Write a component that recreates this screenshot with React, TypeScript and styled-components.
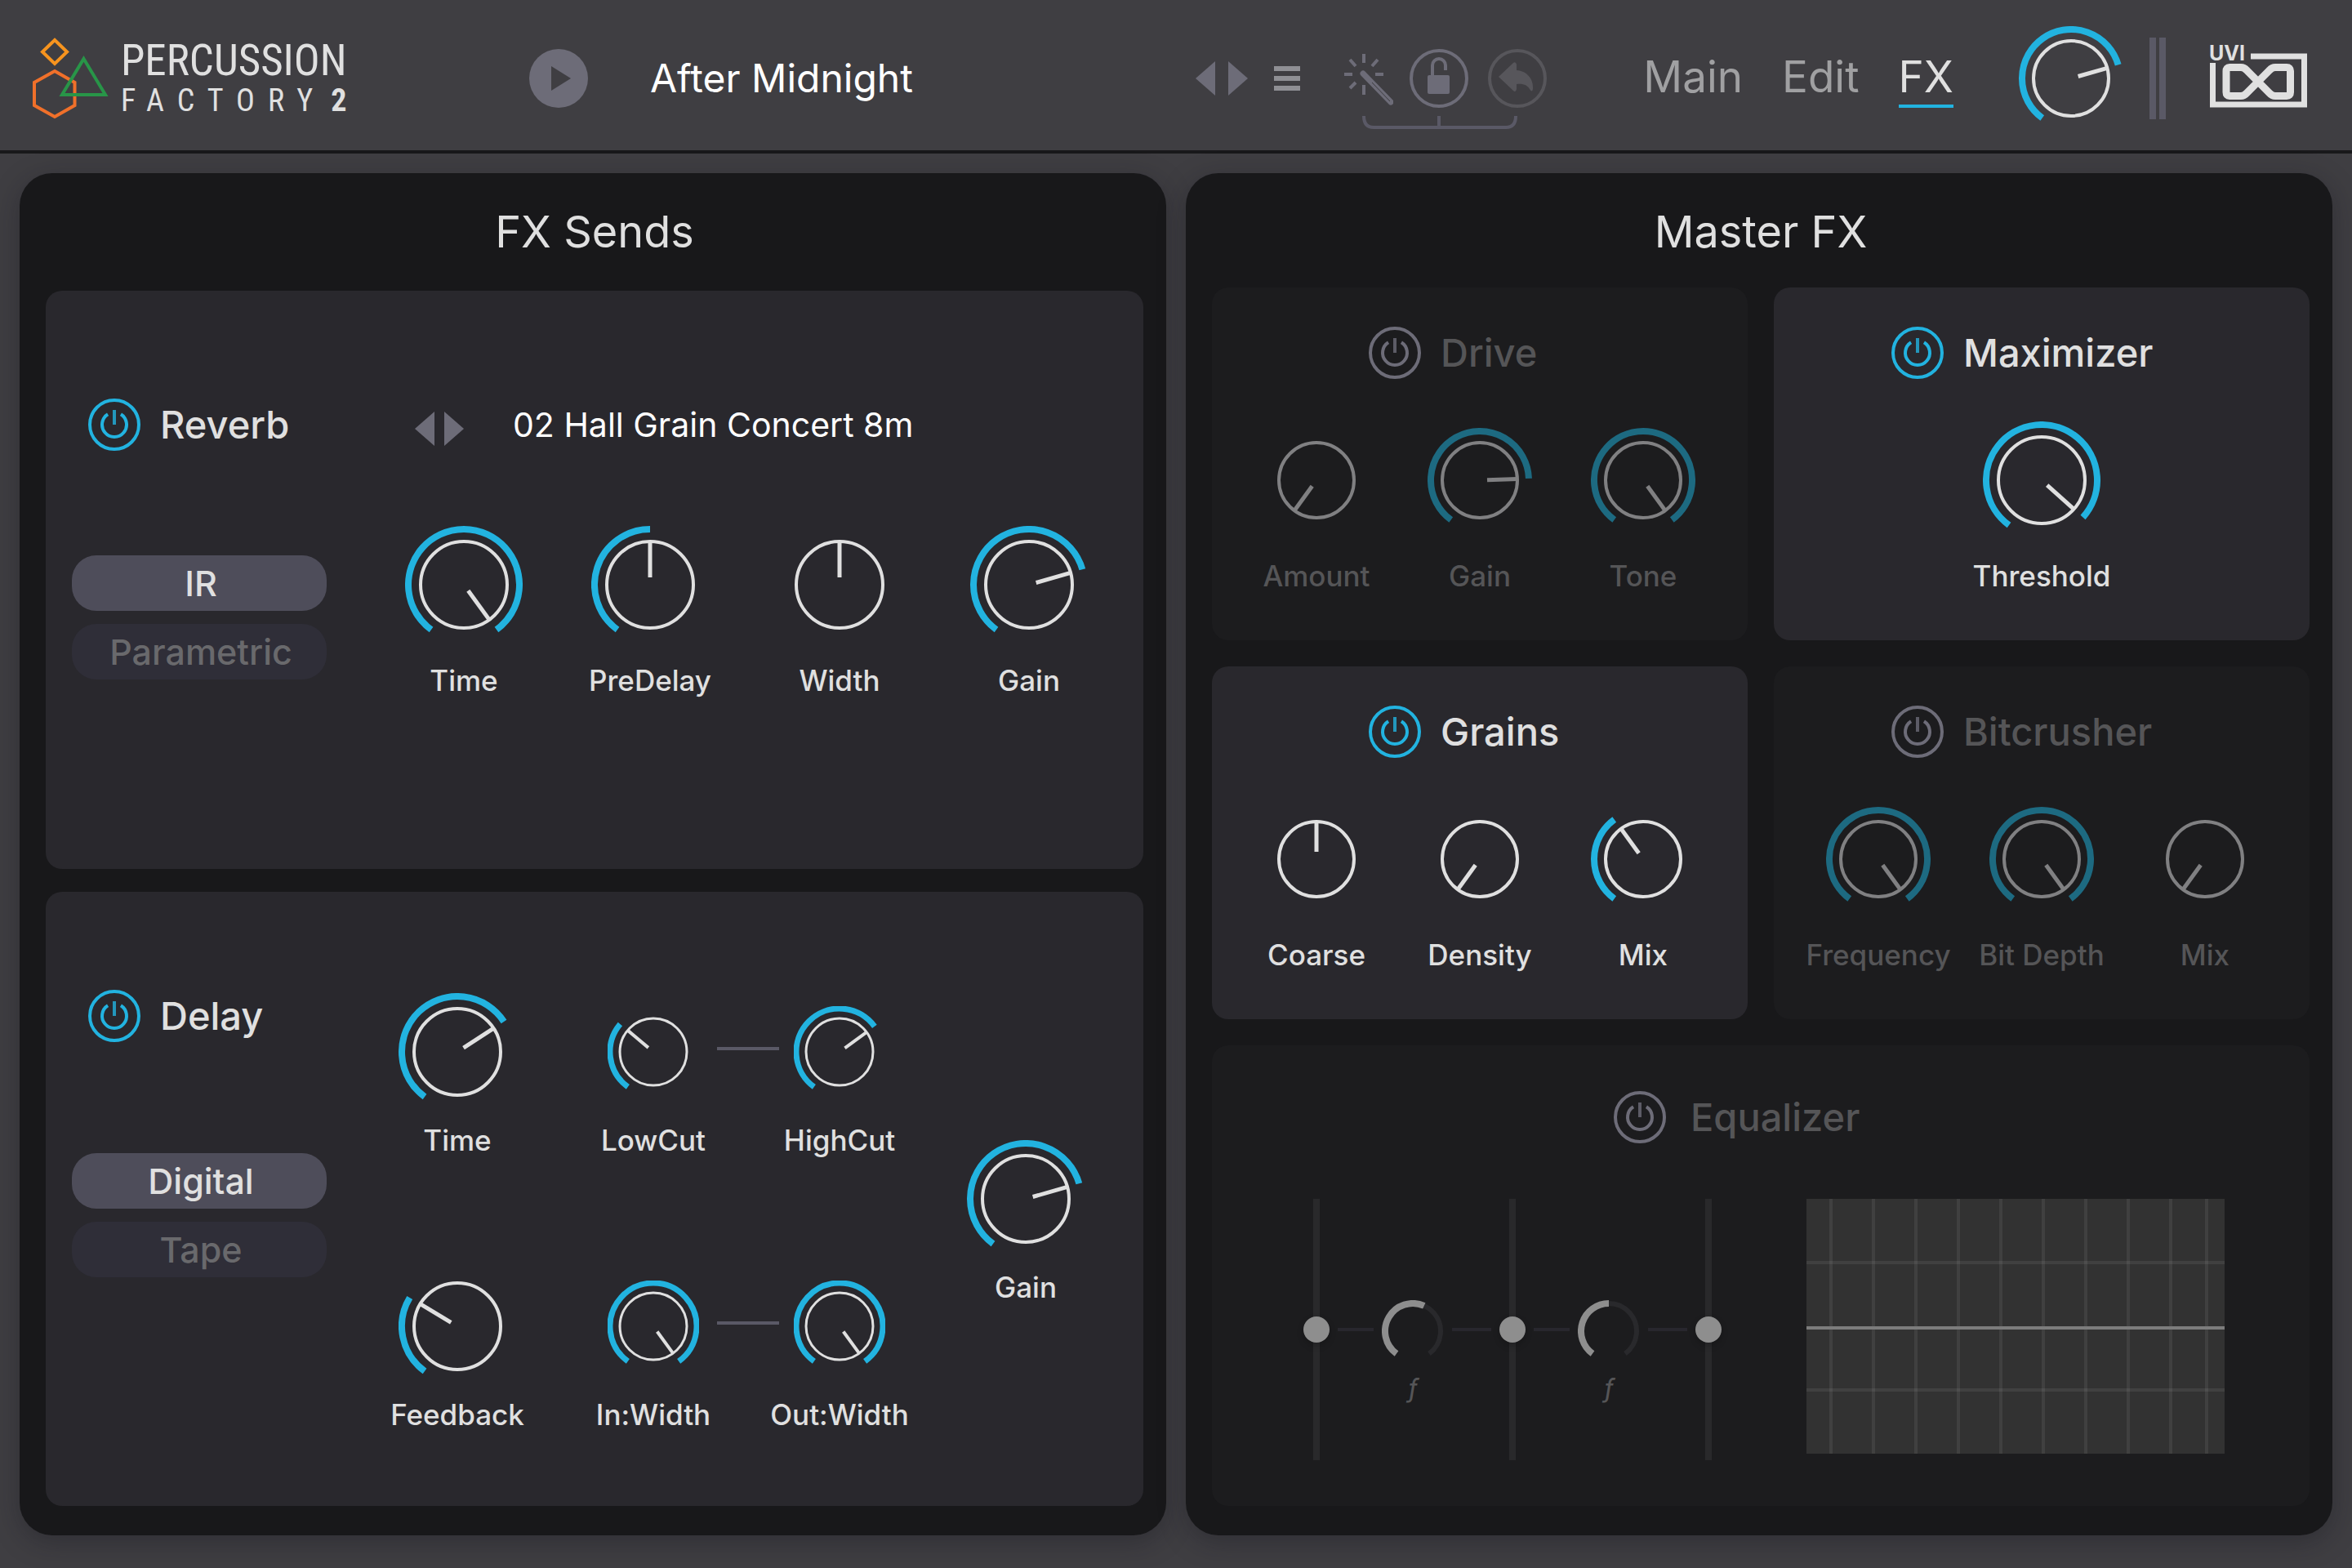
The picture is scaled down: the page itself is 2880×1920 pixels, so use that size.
import React, { useId, useState } from 'react';
import styled, { createGlobalStyle, css } from 'styled-components';

const c = {
  shell: '#3f3e42',
  line: '#18181a',
  panel: '#18181a',
  card: '#29282d',
  cardOff: '#1c1c1e',
  text: '#e0e0e0',
  textOff: '#555557',
  blue: '#22b3e0',
  blueOff: '#1d6a81',
  ringOff: '#808082',
  steel: '#6d6c78',
  slate: '#5a5966',
};

const GlobalStyle = createGlobalStyle`
  *, *::before, *::after { box-sizing: border-box; }
  body {
    margin: 0;
    background: ${c.shell};
    color: ${c.text};
    font-family: Inter, "Open Sans", "Liberation Sans", sans-serif;
  }
  button {
    margin: 0;
    padding: 0;
    border: 0;
    background: none;
    color: inherit;
    font: inherit;
    cursor: pointer;
  }
  svg { display: block; }
`;

/* ---------- shell ---------- */

const Page = styled.div`
  display: flex;
  flex-direction: column;
  min-height: 100vh;
`;

const TopBar = styled.header`
  display: flex;
  align-items: center;
  height: 188px;
  padding: 8px 52px 0 40px;
  border-bottom: 4px solid ${c.line};
`;

const Brand = styled.h1`
  display: flex;
  align-items: center;
  gap: 14px;
  flex: 0 0 608px;
  margin: 0;
  font-weight: 400;
`;

const BrandText = styled.span`
  display: flex;
  flex-direction: column;
  font-family: "Roboto Condensed", "Liberation Sans Narrow", "DejaVu Sans Condensed", sans-serif;
`;

const BrandName = styled.span`
  font-size: 53px;
  line-height: 54px;
`;

const BrandSub = styled.span`
  font-size: 38px;
  line-height: 44px;
  letter-spacing: 16px;
  white-space: nowrap;
`;

const BrandNumber = styled.b`
  margin-left: 6px;
`;

const NowPlaying = styled.div`
  display: flex;
  align-items: center;
  gap: 76px;
  flex: 1;
`;

const SoundName = styled.span`
  color: #fff;
  font-size: 48px;
  line-height: 56px;
  white-space: nowrap;
`;

const Browse = styled.div`
  display: flex;
  align-items: center;
  gap: 32px;
  margin-right: 54px;
`;

const Stepper = styled.div`
  display: flex;
  gap: ${(p: { $gap: number }) => p.$gap}px;
`;

const Tools = styled.div`
  padding-top: 26px;
  margin-right: 118px;
`;

const ToolRow = styled.div`
  display: flex;
  align-items: center;
`;

const ToolButton = styled.button<{ $gap?: number }>`
  margin-right: ${(p) => p.$gap ?? 0}px;
`;

const Nav = styled.nav`
  display: flex;
  gap: 48px;
  margin-right: 80px;
`;

const NavButton = styled.button<{ $active?: boolean }>`
  font-size: 53px;
  line-height: 68px;
  color: ${(p) => (p.$active ? c.text : '#a0a0a2')};
  border-bottom: 4px solid ${(p) => (p.$active ? c.blue : 'transparent')};
`;

const Meters = styled.div`
  display: flex;
  gap: 4px;
  margin: 0 52px 0 32px;
`;

const Meter = styled.div`
  width: 8px;
  height: 100px;
  background: ${c.slate};
`;

const Main = styled.main`
  flex: 1;
  display: grid;
  grid-template-columns: 1fr 1fr;
  gap: 24px;
  padding: 24px 24px 40px;
`;

const Panel = styled.section`
  display: flex;
  flex-direction: column;
  padding: 0 28px 36px 32px;
  border-radius: 40px;
  background: ${c.panel};
  box-shadow: 0 8px 32px rgba(20, 20, 28, 0.35);
`;

const PanelTitle = styled.h2<{ $bottom: number }>`
  margin: 0;
  padding: 40px 0 ${(p) => p.$bottom}px;
  font-size: 54px;
  font-weight: 400;
  line-height: 64px;
  text-align: center;
`;

const SendStack = styled.div`
  flex: 1;
  display: grid;
  grid-template-rows: 708fr 752fr;
  gap: 28px;
`;

const MasterGrid = styled.div`
  flex: 1;
  display: grid;
  grid-template-columns: 1fr 1fr;
  grid-template-rows: 432fr 432fr 564fr;
  gap: 32px;
`;

const Card = styled.article<{ $off?: boolean; $wide?: boolean }>`
  border-radius: 20px;
  background: ${(p) => (p.$off ? c.cardOff : c.card)};
  color: ${(p) => (p.$off ? c.textOff : c.text)};
  ${(p) => p.$wide && css`grid-column: 1 / -1;`}
`;

const SendCard = styled(Card)`
  display: flex;
`;

/* ---------- modules ---------- */

const ModuleHead = styled.div<{ $inset?: number; $top?: number; $gap?: number }>`
  display: flex;
  align-items: center;
  gap: ${(p) => p.$gap ?? 24}px;
  height: 64px;
  margin: ${(p) => p.$top ?? 0}px 0 0 ${(p) => p.$inset ?? 0}px;
`;

const ModuleName = styled.h3`
  margin: 0;
  font-size: 47px;
  font-weight: 500;
  line-height: 64px;
`;

const Side = styled.div<{ $top: number }>`
  flex: 0 0 312px;
  margin-left: 32px;
  padding-top: ${(p) => p.$top}px;
`;

const ModeGroup = styled.div<{ $top: number }>`
  display: flex;
  flex-direction: column;
  gap: 16px;
  margin-top: ${(p) => p.$top}px;
`;

const ModeButton = styled.button<{ $active?: boolean }>`
  height: 68px;
  padding-left: 4px;
  border-radius: 30px;
  font-size: 43px;
  font-weight: 500;
  line-height: 68px;
  color: ${(p) => (p.$active ? c.text : '#69696c')};
  background: ${(p) => (p.$active ? '#4e4d5a' : '#2f2e38')};
`;

const ReverbBody = styled.div`
  flex: 1;
  padding: 138px 26px 0 54px;
`;

const Picker = styled.div`
  display: flex;
  align-items: flex-end;
  gap: 60px;
  height: 52px;
  margin: 0 0 98px 54px;
`;

const PresetName = styled.span`
  color: #fff;
  font-size: 41px;
  line-height: 52px;
  white-space: nowrap;
`;

const ReverbKnobs = styled.div`
  display: grid;
  grid-template-columns: 228fr 228fr 236fr 228fr;
`;

const DelayBody = styled.div`
  flex: 1;
  display: grid;
  grid-template-columns: 228fr 476fr 212fr;
  grid-template-rows: auto auto;
  align-content: start;
  row-gap: 135px;
  padding: 124px 38px 0 46px;
`;

const LinkedPair = styled.div`
  display: grid;
  grid-template-columns: 156px 76px 148px;
  justify-content: center;
`;

const LinkLine = styled.div`
  height: 4px;
  margin-top: 66px;
  background: ${c.slate};
`;

const OutputCell = styled.div`
  grid-column: 3;
  grid-row: 1 / 3;
  padding-top: 180px;
`;

const KnobRow = styled.div<{ $cols: number }>`
  display: grid;
  grid-template-columns: repeat(${(p) => p.$cols}, 1fr);
  padding: 52px 28px 0;
`;

/* ---------- knob ---------- */

const KnobCell = styled.label<{ $gap: number }>`
  display: flex;
  flex-direction: column;
  align-items: center;
  gap: ${(p) => p.$gap}px;
  min-width: 0;
  font-size: 35px;
  font-weight: 500;
  line-height: 42px;
  white-space: nowrap;
`;

const DialBox = styled.span<{ $size: number }>`
  position: relative;
  display: flex;
  align-items: center;
  justify-content: center;
  height: ${(p) => p.$size}px;
`;

const DialInput = styled.input`
  position: absolute;
  inset: 0;
  width: 100%;
  height: 100%;
  margin: 0;
  opacity: 0;
  cursor: pointer;
`;

const point = (r: number, deg: number) => {
  const a = (deg * Math.PI) / 180;
  return [r * Math.sin(a), -r * Math.cos(a)];
};

const arcPath = (r: number, from: number, to: number) => {
  const [x1, y1] = point(r, from);
  const [x2, y2] = point(r, to);
  return `M${x1} ${y1}A${r} ${r} 0 ${to - from > 180 ? 1 : 0} 1 ${x2} ${y2}`;
};

const SWEEP = 144;

const DIALS = {
  large: { box: 144, ring: 53, arc: 68, ringW: 4, arcW: 8, inner: 9 },
  medium: { box: 128, ring: 46, arc: 60, ringW: 4, arcW: 8, inner: 9 },
  small: { box: 112, ring: 41, arc: 53, ringW: 3, arcW: 7, inner: 8 },
};

type KnobProps = {
  label: string;
  angle: number;
  size?: keyof typeof DIALS;
  off?: boolean;
  bipolar?: boolean;
  gap?: number;
  bare?: boolean;
};

function Knob({ label, angle, size = 'large', off, bipolar, gap = 24, bare }: KnobProps) {
  const [deg, setDeg] = useState(angle);
  const d = DIALS[size];
  const start = bipolar ? 0 : -SWEEP;
  const ink = off ? c.ringOff : c.text;
  const [px1, py1] = point(d.inner, deg);
  const [px2, py2] = point(d.ring, deg);
  const half = d.box / 2;
  return (
    <KnobCell $gap={gap}>
      <DialBox $size={bare ? d.box : 144}>
        <svg width={d.box} height={d.box} viewBox={`${-half} ${-half} ${d.box} ${d.box}`} fill="none" aria-hidden="true">
          {deg !== start && (
            <path
              d={arcPath(d.arc, Math.min(start, deg), Math.max(start, deg))}
              stroke={off ? c.blueOff : c.blue}
              strokeWidth={d.arcW}
            />
          )}
          <circle r={d.ring} stroke={ink} strokeWidth={d.ringW} />
          <path d={`M${px1} ${py1}L${px2} ${py2}`} stroke={ink} strokeWidth={d.ringW + 1} />
        </svg>
        <DialInput
          type="range"
          min={-SWEEP}
          max={SWEEP}
          value={deg}
          aria-label={label}
          onChange={(e) => setDeg(Number(e.target.value))}
        />
      </DialBox>
      {!bare && label}
    </KnobCell>
  );
}

/* ---------- small controls ---------- */

function Power({ name, off }: { name: string; off?: boolean }) {
  return (
    <button type="button" aria-label={`${name} power`} aria-pressed={!off}>
      <svg width="64" height="64" viewBox="-32 -32 64 64" fill="none" stroke={off ? c.steel : c.blue}>
        <circle r="30" strokeWidth="4" />
        <path d={arcPath(15, 32, 328)} strokeWidth="4" />
        <path d="M0 -18V0" strokeWidth="4" opacity="0.8" />
      </svg>
    </button>
  );
}

function Arrows({ gap, what }: { gap: number; what: string }) {
  return (
    <Stepper $gap={gap}>
      <button type="button" aria-label={`Previous ${what}`}>
        <svg width="24" height="42" viewBox="0 0 24 42" fill={c.steel}>
          <path d="M24 0V42L0 21Z" />
        </svg>
      </button>
      <button type="button" aria-label={`Next ${what}`}>
        <svg width="24" height="42" viewBox="0 0 24 42" fill={c.steel}>
          <path d="M0 0V42L24 21Z" />
        </svg>
      </button>
    </Stepper>
  );
}

function Modes({ options, top }: { options: string[]; top: number }) {
  const [active, setActive] = useState(options[0]);
  return (
    <ModeGroup $top={top}>
      {options.map((o) => (
        <ModeButton key={o} type="button" $active={o === active} aria-pressed={o === active} onClick={() => setActive(o)}>
          {o}
        </ModeButton>
      ))}
    </ModeGroup>
  );
}

/* ---------- equalizer ---------- */

const EqBody = styled.div`
  display: flex;
  align-items: flex-start;
  gap: 104px;
  padding: 68px 104px 0 112px;
`;

const Bands = styled.div`
  display: flex;
`;

const BandSlider = styled.input`
  appearance: none;
  writing-mode: vertical-lr;
  direction: rtl;
  width: 32px;
  height: 320px;
  margin: 0;
  background: linear-gradient(#29292b, #29292b) center / 8px 100% no-repeat;

  &::-webkit-slider-runnable-track {
    width: 32px;
    height: 320px;
    background: transparent;
  }
  &::-webkit-slider-thumb {
    appearance: none;
    width: 32px;
    height: 32px;
    border: 0;
    border-radius: 50%;
    background: #8e8e8e;
    box-shadow: 0 4px 8px rgba(0, 0, 0, 0.2);
  }
`;

const Crossover = styled.div`
  display: grid;
  grid-template-columns: 44px 76px 48px;
  column-gap: 10px;
  align-content: start;
  padding: 124px 10px 0;
`;

const CrossLine = styled.div`
  height: 4px;
  margin-top: 34px;
  background: #28272e;
`;

const FreqCell = styled.label`
  display: flex;
  flex-direction: column;
  align-items: center;
  gap: 14px;
  font-size: 32px;
  font-style: italic;
  line-height: 36px;
`;

const Graph = styled.div`
  flex: 1;
  height: 312px;
  background: #323232;
`;

function Frequency({ angle, name }: { angle: number; name: string }) {
  const id = useId();
  const [deg, setDeg] = useState(angle);
  return (
    <FreqCell htmlFor={id}>
      <DialBox $size={76}>
        <svg width="76" height="76" viewBox="-38 -38 76 76" fill="none" strokeWidth="8" aria-hidden="true">
          <path d={arcPath(34, -SWEEP, SWEEP)} stroke="#29292c" strokeWidth="6" />
          <path d={arcPath(34, -SWEEP, deg)} stroke="#8e8e8e" />
        </svg>
        <DialInput
          id={id}
          type="range"
          min={-SWEEP}
          max={SWEEP}
          value={deg}
          aria-label={name}
          onChange={(e) => setDeg(Number(e.target.value))}
        />
      </DialBox>
      ƒ
    </FreqCell>
  );
}

const GRID_X = [30, 82, 134, 186, 238, 290, 342, 394, 446, 490];

function Response() {
  return (
    <Graph>
      <svg width="100%" height="100%" viewBox="0 0 512 312" preserveAspectRatio="none" strokeWidth="4">
        <g stroke="#fff" strokeOpacity="0.07">
          {GRID_X.map((x) => (
            <path key={x} d={`M${x} 0V312`} />
          ))}
          <path d="M0 78H512M0 234H512" />
        </g>
        <path d="M0 158H512" stroke="#7c7c7c" />
      </svg>
    </Graph>
  );
}

/* ---------- artwork ---------- */

function PercussionMark() {
  return (
    <svg width="94" height="100" viewBox="40 44 94 100" fill="none" strokeWidth="4" aria-hidden="true">
      <path d="M67 47L82 61.500L67 76L52 61.500Z" stroke="#f7941e" />
      <path d="M67 85L91.500 99V127L67 141L42 127V99Z" stroke="#f0702a" />
      <path d="M102.500 70L129 114H76Z" stroke="#289548" />
    </svg>
  );
}

function UviMark() {
  return (
    <svg width="124" height="92" viewBox="2704 50 124 92" fill="none" aria-label="UVI">
      <text x="2705" y="74" fontSize="25" fontWeight="700" fill={c.text}>
        UVI
      </text>
      <path d="M2756 69H2821.500V128H2709.500V77" stroke={c.text} strokeWidth="7" />
      <path
        d="M2730 82.500H2744Q2748 82.500 2751 86L2779 114Q2782 117.500 2786 117.500H2800Q2804.500 117.500 2804.500 113V87Q2804.500 82.500 2800 82.500H2786Q2782 82.500 2779 86L2751 114Q2748 117.500 2744 117.500H2730Q2726 117.500 2726 113V87Q2726 82.500 2730 82.500Z"
        stroke={c.text}
        strokeWidth="9"
      />
    </svg>
  );
}

function Header() {
  return (
    <TopBar>
      <Brand>
        <PercussionMark />
        <BrandText>
          <BrandName>PERCUSSION</BrandName>
          <BrandSub>
            FACTORY<BrandNumber>2</BrandNumber>
          </BrandSub>
        </BrandText>
      </Brand>

      <NowPlaying>
        <button type="button" aria-label="Play">
          <svg width="72" height="72" viewBox="0 0 72 72">
            <circle cx="36" cy="36" r="36" fill={c.steel} />
            <path d="M27 21V51L51 36Z" fill={c.shell} />
          </svg>
        </button>
        <SoundName>After Midnight</SoundName>
      </NowPlaying>

      <Browse>
        <Arrows gap={16} what="sound" />
        <button type="button" aria-label="Sound menu">
          <svg width="32" height="30" viewBox="0 0 32 30" fill="#8f8f94">
            <path d="M0 0H32V6H0ZM0 12H32V18H0ZM0 24H32V30H0Z" />
          </svg>
        </button>
      </Browse>

      <Tools>
        <ToolRow>
          <ToolButton type="button" $gap={20} aria-label="Randomize">
            <svg width="60" height="72" viewBox="1646 60 60 72" stroke={c.steel} strokeWidth="4" fill="none">
              <path d="M1670 66V77M1670 104V116M1646 91H1656M1684 91H1694M1653 73L1660 81M1687 73L1680 81M1653 108L1660 101" />
              <path d="M1669 90L1703 125" strokeWidth="7" strokeLinecap="round" />
              <path d="M1680 101L1702 124" stroke={c.shell} strokeWidth="1" />
            </svg>
          </ToolButton>
          <ToolButton type="button" $gap={24} aria-label="Unlocked">
            <svg width="72" height="72" viewBox="1726 60 72 72" stroke={c.steel} fill="none">
              <circle cx="1762" cy="96" r="34" strokeWidth="4" />
              <rect x="1748" y="92" width="27" height="23" rx="2" fill={c.steel} stroke="none" />
              <path d="M1754 93V80A8 8 0 0 1 1770 80V86" strokeWidth="4" />
            </svg>
          </ToolButton>
          <ToolButton type="button" aria-label="Undo">
            <svg width="72" height="72" viewBox="1822 60 72 72" fill="none">
              <circle cx="1858" cy="96" r="34" stroke="#57565b" strokeWidth="4" />
              <path
                d="M1835 94L1853 77Q1856 75 1857 79V86C1870 87 1878 97 1877 109Q1876 114 1873 109C1870 104 1865 102 1857 103V109Q1856 114 1853 111Z"
                fill="#57565b"
              />
            </svg>
          </ToolButton>
        </ToolRow>
        <svg width="248" height="26" viewBox="1646 132 248 26" fill="none" stroke={c.slate} strokeWidth="4" aria-hidden="true">
          <path d="M1670 142Q1670 156 1682 156H1844Q1856 156 1856 142M1762 142V156" />
        </svg>
      </Tools>

      <Nav>
        <NavButton type="button">Main</NavButton>
        <NavButton type="button">Edit</NavButton>
        <NavButton type="button" $active aria-current="page">
          FX
        </NavButton>
      </Nav>

      <Knob label="Volume" angle={74} size="medium" bare />
      <Meters>
        <Meter />
        <Meter />
      </Meters>
      <UviMark />
    </TopBar>
  );
}

/* ---------- master effects ---------- */

type Dial = Pick<KnobProps, 'label' | 'angle' | 'size' | 'bipolar'>;

function Effect({ name, inset, off, dials }: { name: string; inset: number; off?: boolean; dials: Dial[] }) {
  return (
    <Card $off={off}>
      <ModuleHead $inset={inset} $top={48}>
        <Power name={name} off={off} />
        <ModuleName>{name}</ModuleName>
      </ModuleHead>
      <KnobRow $cols={dials.length}>
        {dials.map((d) => (
          <Knob key={d.label} size="medium" off={off} {...d} />
        ))}
      </KnobRow>
    </Card>
  );
}

export default function App() {
  return (
    <Page>
      <GlobalStyle />
      <Header />
      <Main>
        <Panel>
          <PanelTitle $bottom={40}>FX Sends</PanelTitle>
          <SendStack>
            <SendCard>
              <Side $top={132}>
                <ModuleHead $inset={20}>
                  <Power name="Reverb" />
                  <ModuleName>Reverb</ModuleName>
                </ModuleHead>
                <Modes options={['IR', 'Parametric']} top={128} />
              </Side>
              <ReverbBody>
                <Picker>
                  <Arrows gap={12} what="impulse response" />
                  <PresetName>02 Hall Grain Concert 8m</PresetName>
                </Picker>
                <ReverbKnobs>
                  <Knob label="Time" angle={144} />
                  <Knob label="PreDelay" angle={0} />
                  <Knob label="Width" angle={0} bipolar />
                  <Knob label="Gain" angle={74} />
                </ReverbKnobs>
              </ReverbBody>
            </SendCard>

            <SendCard>
              <Side $top={120}>
                <ModuleHead $inset={20}>
                  <Power name="Delay" />
                  <ModuleName>Delay</ModuleName>
                </ModuleHead>
                <Modes options={['Digital', 'Tape']} top={136} />
              </Side>
              <DelayBody>
                <Knob label="Time" angle={57} gap={15} />
                <LinkedPair>
                  <Knob label="LowCut" angle={-50} size="small" gap={15} />
                  <LinkLine />
                  <Knob label="HighCut" angle={54} size="small" gap={15} />
                </LinkedPair>
                <OutputCell>
                  <Knob label="Gain" angle={74} gap={15} />
                </OutputCell>
                <Knob label="Feedback" angle={-59} gap={15} />
                <LinkedPair>
                  <Knob label="In:Width" angle={144} size="small" gap={15} />
                  <LinkLine />
                  <Knob label="Out:Width" angle={144} size="small" gap={15} />
                </LinkedPair>
              </DelayBody>
            </SendCard>
          </SendStack>
        </Panel>

        <Panel>
          <PanelTitle $bottom={36}>Master FX</PanelTitle>
          <MasterGrid>
            <Effect
              name="Drive"
              inset={192}
              off
              dials={[
                { label: 'Amount', angle: -144 },
                { label: 'Gain', angle: 88 },
                { label: 'Tone', angle: 144 },
              ]}
            />
            <Effect name="Maximizer" inset={144} dials={[{ label: 'Threshold', angle: 132, size: 'large' }]} />
            <Effect
              name="Grains"
              inset={192}
              dials={[
                { label: 'Coarse', angle: 0, bipolar: true },
                { label: 'Density', angle: -144 },
                { label: 'Mix', angle: -36 },
              ]}
            />
            <Effect
              name="Bitcrusher"
              inset={144}
              off
              dials={[
                { label: 'Frequency', angle: 144 },
                { label: 'Bit Depth', angle: 144 },
                { label: 'Mix', angle: -144 },
              ]}
            />
            <Card $off $wide>
              <ModuleHead $inset={492} $top={56} $gap={30}>
                <Power name="Equalizer" off />
                <ModuleName>Equalizer</ModuleName>
              </ModuleHead>
              <EqBody>
                <Bands>
                  <BandSlider type="range" min="0" max="100" defaultValue="50" aria-label="Low band gain" />
                  <Crossover>
                    <CrossLine />
                    <Frequency angle={24} name="Low crossover frequency" />
                    <CrossLine />
                  </Crossover>
                  <BandSlider type="range" min="0" max="100" defaultValue="50" aria-label="Mid band gain" />
                  <Crossover>
                    <CrossLine />
                    <Frequency angle={0} name="High crossover frequency" />
                    <CrossLine />
                  </Crossover>
                  <BandSlider type="range" min="0" max="100" defaultValue="50" aria-label="High band gain" />
                </Bands>
                <Response />
              </EqBody>
            </Card>
          </MasterGrid>
        </Panel>
      </Main>
    </Page>
  );
}
